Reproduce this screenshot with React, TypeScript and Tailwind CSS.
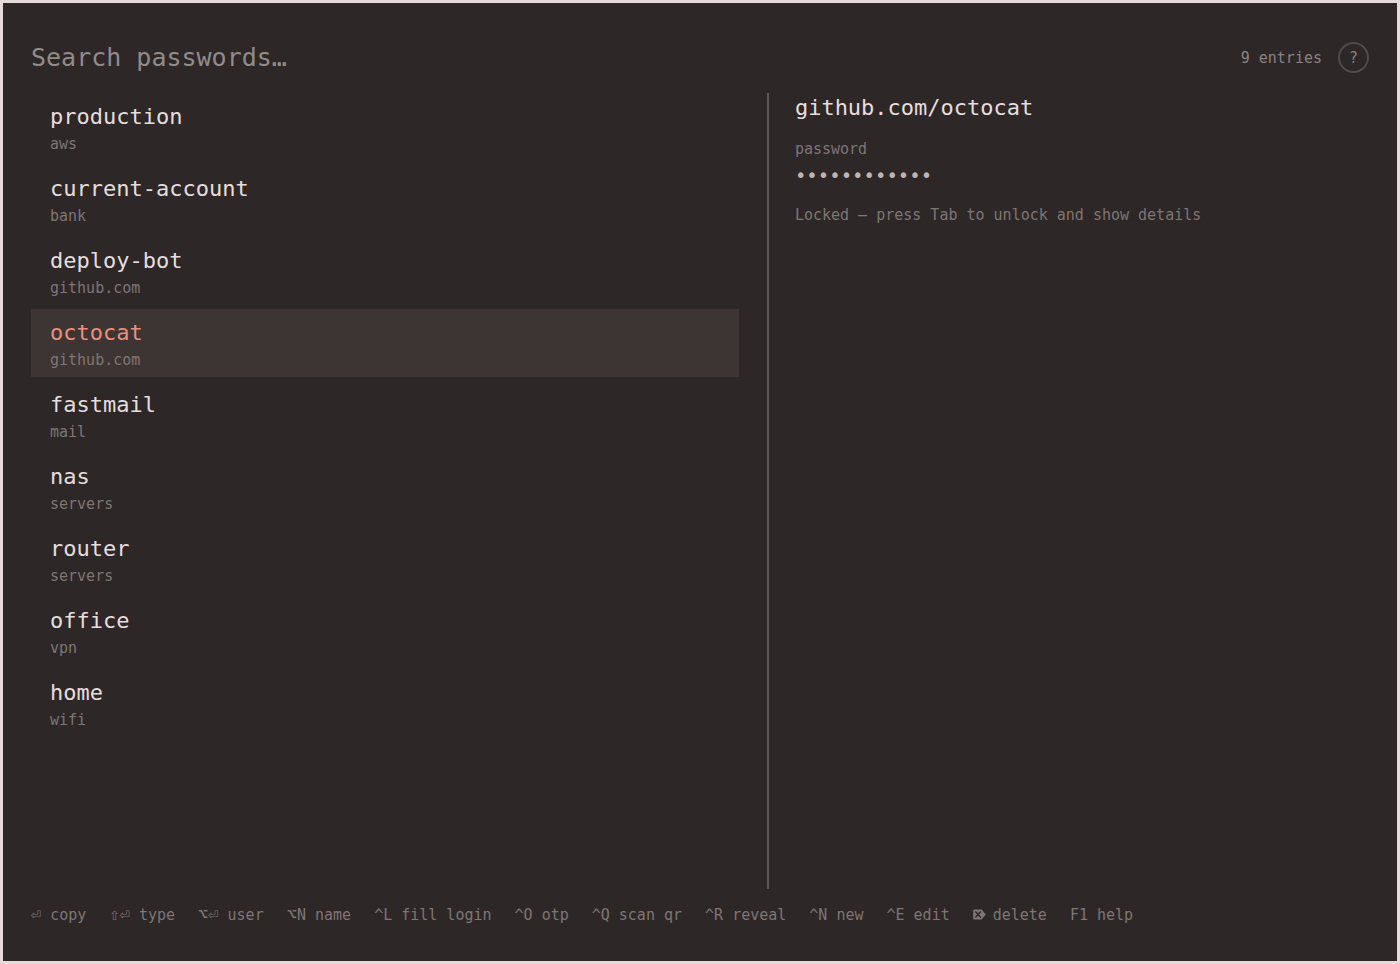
import { useState } from 'react';

interface Entry {
  name: string;
  folder: string;
}

interface Shortcut {
  symbol?: string;
  letter?: string;
  label: string;
}

const entries: Entry[] = [
  { name: 'production', folder: 'aws' },
  { name: 'current-account', folder: 'bank' },
  { name: 'deploy-bot', folder: 'github.com' },
  { name: 'octocat', folder: 'github.com' },
  { name: 'fastmail', folder: 'mail' },
  { name: 'nas', folder: 'servers' },
  { name: 'router', folder: 'servers' },
  { name: 'office', folder: 'vpn' },
  { name: 'home', folder: 'wifi' },
];

const shortcuts: Shortcut[] = [
  { symbol: '⏎', label: 'copy' },
  { symbol: '⇧⏎', label: 'type' },
  { symbol: '⌥⏎', label: 'user' },
  { symbol: '⌥', letter: 'N', label: 'name' },
  { letter: '^L', label: 'fill login' },
  { letter: '^O', label: 'otp' },
  { letter: '^Q', label: 'scan qr' },
  { letter: '^R', label: 'reveal' },
  { letter: '^N', label: 'new' },
  { letter: '^E', label: 'edit' },
  { label: 'delete' },
  { letter: 'F1', label: 'help' },
];

function DeleteKey() {
  return (
    <svg className="mr-[7px] inline-block align-baseline" width="13" height="11" viewBox="0 0 13 11" aria-hidden="true">
      <path d="M1.2 0.5H8.6L12.8 5.5L8.6 10.5H1.2Q0.2 10.5 0.2 9.5V1.5Q0.2 0.5 1.2 0.5Z" fill="currentColor" />
      <path d="M2.4 2.6L7.8 8.4M7.8 2.6L2.4 8.4" stroke="#2d2727" strokeWidth="1.4" fill="none" />
    </svg>
  );
}

export default function App() {
  const [query, setQuery] = useState('');
  const [selected, setSelected] = useState('github.com/octocat');

  const filtered = entries.filter(e => `${e.folder}/${e.name}`.includes(query.toLowerCase()));

  return (
    <div className="flex min-h-screen flex-col border-3 border-[#e6dadb] bg-[#2d2727] p-7 font-['DejaVu_Sans_Mono',monospace] text-[15px] leading-5 text-[#7d7675]">
      <header className="flex items-center gap-4 pt-[11px] pb-5">
        <input
          type="text"
          aria-label="Search passwords"
          placeholder="Search passwords…"
          value={query}
          onChange={(e) => setQuery(e.target.value)}
          className="h-[31px] min-w-0 flex-1 bg-transparent text-[25px] text-[#e6dedd] outline-none placeholder:text-[#938b89]"
        />
        <span className="text-[#8a8280]">{filtered.length} entries</span>
        <button
          aria-label="Help"
          className="flex size-[31px] items-center justify-center rounded-full border-2 border-[#514a49] text-[#8a8280]"
        >
          ?
        </button>
      </header>

      <main className="flex flex-1">
        <div className="w-[55%] pr-7">
          <ul className="flex flex-col gap-1">
            {filtered.map((entry) => {
              const path = `${entry.folder}/${entry.name}`;
              const active = path === selected;
              return (
                <li key={path}>
                  <button
                    onClick={() => setSelected(path)}
                    className={`block w-full px-[19px] py-[7px] text-left ${active ? 'bg-[#3d3434]' : ''}`}
                  >
                    <span className={`block text-[22px] leading-[34px] ${active ? 'text-[#e9917a]' : 'text-[#e6dedd]'}`}>
                      {entry.name}
                    </span>
                    <span className="block leading-5">{entry.folder}</span>
                  </button>
                </li>
              );
            })}
          </ul>
        </div>

        <section className="flex-1 border-l-2 border-[#5e5756] pl-[26px]">
          <h1 className="text-[22px] leading-[30px] text-[#e6dedd]">{selected}</h1>
          <dl className="mt-4">
            <dt>password</dt>
            <dd className="text-[19px] leading-8 text-[#bdb4b3]">••••••••••••</dd>
          </dl>
          <p className="mt-[14px]">Locked — press Tab to unlock and show details</p>
        </section>
      </main>

      <footer className="flex flex-wrap items-baseline gap-x-[23px] pt-4 pb-2">
        {shortcuts.map((s) => (
          <span key={s.label} className="whitespace-nowrap">
            {s.symbol && <span className="text-[17px] leading-none">{s.symbol}</span>}
            {s.letter}
            {s.symbol || s.letter ? ' ' : <DeleteKey />}
            {s.label}
          </span>
        ))}
      </footer>
    </div>
  );
}
